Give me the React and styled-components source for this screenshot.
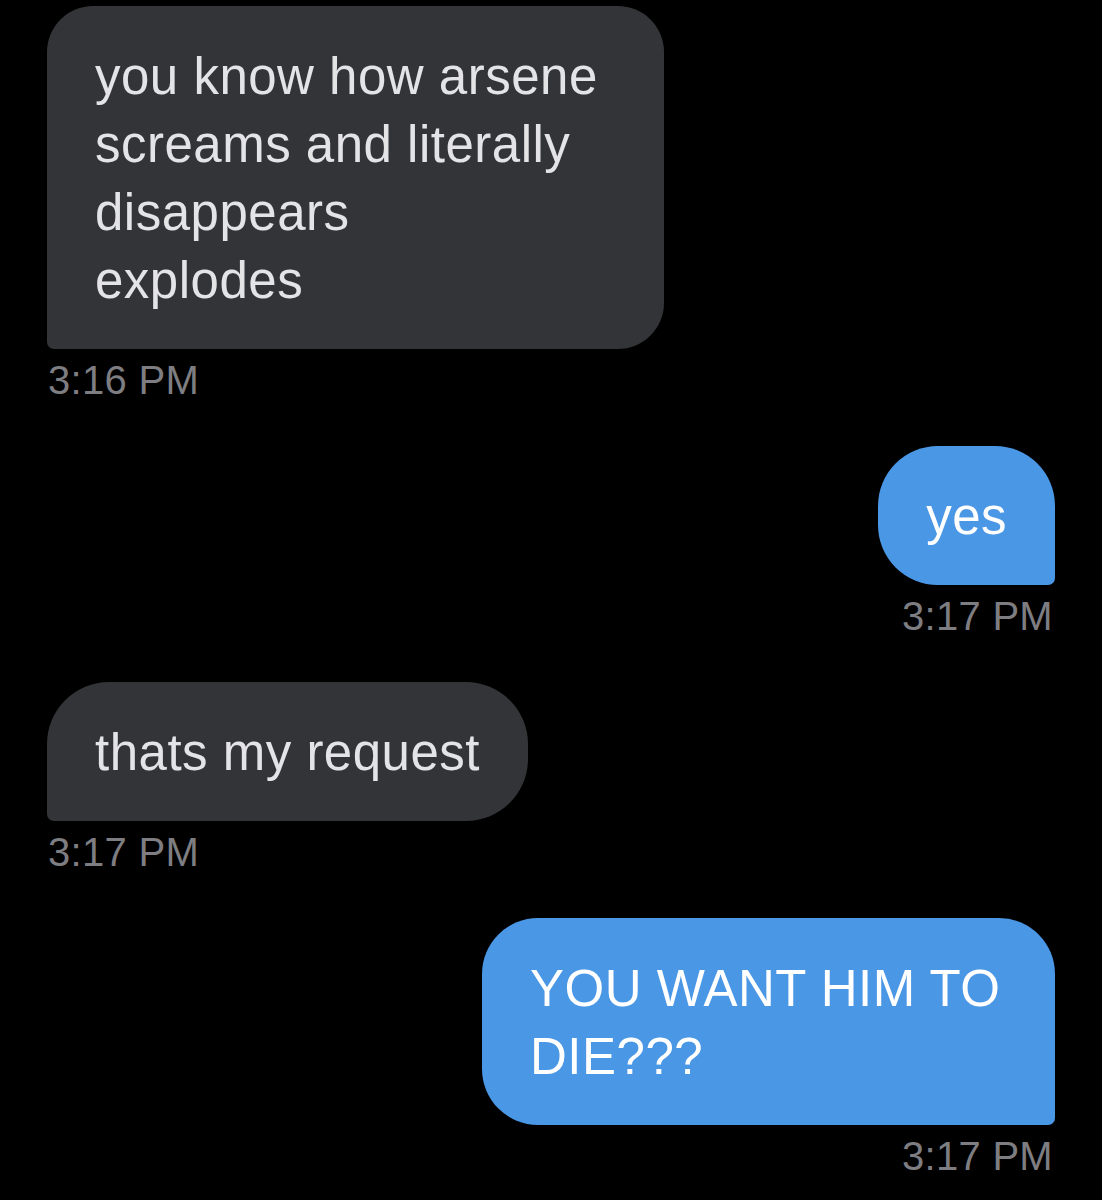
import React from 'react'
import styled, { createGlobalStyle } from 'styled-components'

const Global = createGlobalStyle`
  html, body {
    margin: 0;
    padding: 0;
    background: #000;
  }
  body {
    font-family: "Liberation Sans", Arial, sans-serif;
  }
`

const Thread = styled.div`
  display: flex;
  flex-direction: column;
  gap: 44px;
  padding: 6px 47px 0 47px;
  min-height: 1200px;
  box-sizing: border-box;
  background: #000;
`

const Group = styled.div`
  display: flex;
  flex-direction: column;
  align-items: ${p => (p.sent ? 'flex-end' : 'flex-start')};
`

const Bubble = styled.div`
  box-sizing: border-box;
  width: ${p => (p.width ? `${p.width}px` : 'auto')};
  padding: 37px 48px 34px 48px;
  background: ${p => (p.sent ? '#4a97e6' : '#323437')};
  color: ${p => (p.sent ? '#ffffff' : '#e4e4e6')};
  font-size: 51px;
  line-height: 68px;
  letter-spacing: 0.5px;
  white-space: pre;
  border-radius: ${p => (p.sent ? `${p.r}px ${p.r}px 7px ${p.r}px` : `${p.r}px ${p.r}px ${p.r}px 7px`)};
`

const Stamp = styled.div`
  margin-top: 9px;
  font-size: 40px;
  line-height: 44px;
  letter-spacing: 0.3px;
  color: #7d7d82;
  padding: 0 2px 0 1px;
`

const messages = [
  { text: 'you know how arsene\nscreams and literally\ndisappears\nexplodes', time: '3:16 PM', width: 617, r: 46 },
  { text: 'yes', time: '3:17 PM', sent: true, r: 60 },
  { text: 'thats my request', time: '3:17 PM', r: 62 },
  { text: 'YOU WANT HIM TO\nDIE???', time: '3:17 PM', sent: true, width: 573, r: 56 },
]

const App = () => {
  return (
    <>
      <Global />
      <Thread>
        {messages.map((m, i) => (
          <Group key={i} sent={m.sent}>
            <Bubble sent={m.sent} width={m.width} r={m.r}>
              {m.text}
            </Bubble>
            <Stamp>{m.time}</Stamp>
          </Group>
        ))}
      </Thread>
    </>
  )
}

export default App
